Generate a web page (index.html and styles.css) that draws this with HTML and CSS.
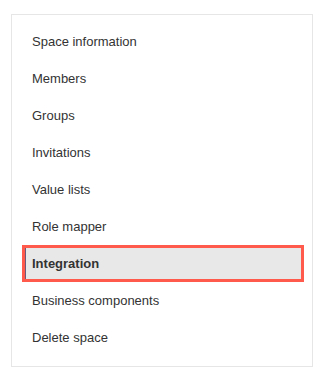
FILE: index.html
```html
<!DOCTYPE html>
<html lang="en">
<head>
    <meta charset="UTF-8">
    <title>Space settings</title>
    <link rel="stylesheet" href="styles.css">
</head>
<body>
<div class="panel">
    <ul class="menu">
        <li>Space information</li>
        <li>Members</li>
        <li>Groups</li>
        <li>Invitations</li>
        <li>Value lists</li>
        <li>Role mapper</li>
        <li class="active">Integration</li>
        <li>Business components</li>
        <li>Delete space</li>
    </ul>
</div>
</body>
</html>
```

FILE: styles.css
```css
*{
    margin: 0;
    padding: 0;
    box-sizing: border-box;
}
body{
    background: #fff;
    font-family: "Liberation Sans", Arial, sans-serif;
    font-size: 13px;
    color: #333;
    padding: 14px 10px 0 11px;
}
.panel{
    width: 302px;
    height: 353px;
    border: 1px solid #e6e6e6;
    padding: 8px 0;
}
.menu{
    list-style: none;
}
.menu li{
    height: 37px;
    line-height: 37px;
    padding-left: 20px;
}
.menu .active{
    margin: 0 8px 0 10px;
    padding-left: 7px;
    background: #e8e8e8;
    font-weight: bold;
    line-height: 31px;
    border: 3px solid #ff5a4c;
    box-shadow: inset 1px 0 0 #6b5a7a;
}
```
